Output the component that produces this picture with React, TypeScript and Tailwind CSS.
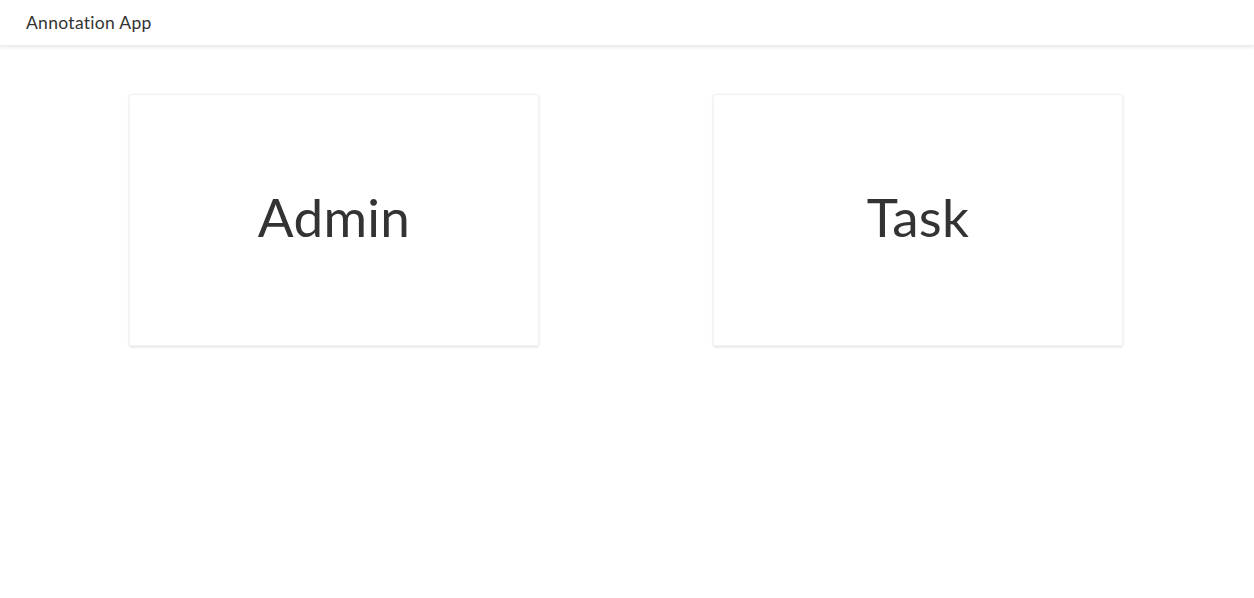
import React from "react";

export default function App() {
  return (
    <div
      className="w-[1254px] h-[598px] bg-white text-[#333333] overflow-hidden"
      style={{ fontFamily: 'Lato, "Noto Sans CJK JP", sans-serif' }}
    >
      <header className="h-[46px] flex items-center pl-[26px] bg-white shadow-[0_2px_3px_rgba(0,0,0,0.07)] border-b border-[#eeeeee]">
        <span className="text-[17.5px] leading-none tracking-[0.3px]">Annotation App</span>
      </header>
      <main className="flex justify-between w-[994px] ml-[129px] mt-[48px]">
        {["Admin", "Task"].map((t) => (
          <div
            key={t}
            className="w-[410px] h-[252px] flex items-center justify-center bg-white border border-[#f2f2f2] shadow-[0_2px_2px_rgba(0,0,0,0.07),-1px_0_2px_rgba(0,0,0,0.03),1px_0_2px_rgba(0,0,0,0.03)] rounded-[2px]"
          >
            <span className="text-[53px] leading-none pb-[7px] tracking-[0.3px]">{t}</span>
          </div>
        ))}
      </main>
    </div>
  );
}
